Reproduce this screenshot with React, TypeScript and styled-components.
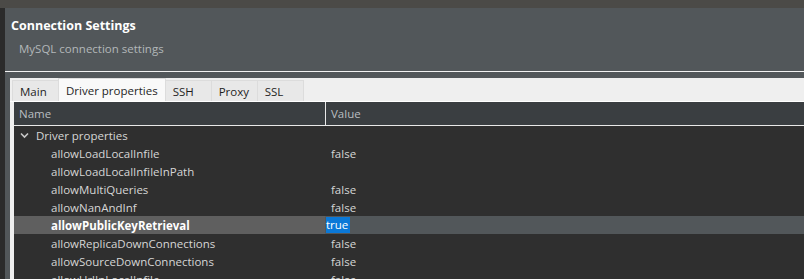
import styled, { createGlobalStyle } from "styled-components";

const GlobalStyle = createGlobalStyle`
  html, body {
    margin: 0;
    padding: 0;
    background: #2b2b2b;
    overflow: hidden;
  }
  * { box-sizing: border-box; }
`;

const Page = styled.div`
  width: 804px;
  height: 279px;
  display: flex;
  flex-direction: column;
  font-family: "Open Sans", "Noto Sans CJK KR", sans-serif;
  font-size: 11.5px;
  overflow: hidden;
`;

const TopBar = styled.div`
  height: 8px;
  flex: none;
  background: #4b4a47;
`;

const Body = styled.div`
  flex: 1;
  display: flex;
  min-height: 0;
`;

const SideStrip = styled.div`
  width: 5px;
  flex: none;
  background: #2b2b2b;
`;

const Dialog = styled.div`
  flex: 1;
  display: flex;
  flex-direction: column;
  background: #52575a;
  min-width: 0;
`;

const Header = styled.div`
  height: 63px;
  flex: none;
  padding: 9px 0 0 6px;
`;

const Title = styled.div`
  color: #ffffff;
  font-weight: 700;
  font-size: 12.5px;
  line-height: 18px;
`;

const Subtitle = styled.div`
  color: #b3b7b9;
  font-size: 11.5px;
  line-height: 18px;
  margin: 5px 0 0 8px;
`;

const Rule = styled.div`
  height: 1px;
  flex: none;
  background: #f2f2f2;
  margin-bottom: 6px;
`;

const TabPane = styled.div`
  flex: 1;
  display: flex;
  flex-direction: column;
  margin-left: 5px;
  background: #efefef;
  padding-left: 4px;
  min-height: 0;
`;

const TabStrip = styled.div`
  height: 24px;
  flex: none;
  display: flex;
  align-items: flex-end;
  border-bottom: 1px solid #ffffff;
  margin-left: -4px;
  padding-left: 2px;
`;

const Tab = styled.div<{ $active?: boolean }>`
  height: ${({ $active }) => ($active ? "23px" : "21px")};
  min-width: 47px;
  padding: 0 7px;
  margin-right: -1px;
  display: flex;
  align-items: center;
  color: #1e1e1e;
  background: ${({ $active }) => ($active ? "#f9f9f9" : "#e8e8e8")};
  border: 1px solid #dcdcdc;
  border-bottom: none;
  position: relative;
  z-index: ${({ $active }) => ($active ? 1 : 0)};
`;

const Tree = styled.div`
  flex: 1;
  display: flex;
  flex-direction: column;
  background: #2f2f2f;
  min-height: 0;
`;

const HeadRow = styled.div`
  height: 24px;
  flex: none;
  display: grid;
  grid-template-columns: 311px 1fr;
  background: #3a3e41;
  border-bottom: 1px solid #e8e8e8;
`;

const HeadCell = styled.div<{ $divider?: boolean }>`
  display: flex;
  align-items: center;
  padding-left: 5px;
  color: #b9bdc0;
  border-left: ${({ $divider }) => ($divider ? "1px solid #e8e8e8" : "none")};
`;

const Row = styled.div<{ $selected?: boolean }>`
  height: 18px;
  flex: none;
  display: grid;
  grid-template-columns: 311px 1fr;
  background: ${({ $selected }) => ($selected ? "#52575a" : "transparent")};
`;

const NameCell = styled.div<{ $indent: number; $selected?: boolean }>`
  display: flex;
  align-items: center;
  padding-left: ${({ $indent }) => $indent}px;
  color: ${({ $selected }) => ($selected ? "#ffffff" : "#d6d6d6")};
  font-weight: ${({ $selected }) => ($selected ? 700 : 400)};
  background: ${({ $selected }) => ($selected ? "#5f5f5f" : "transparent")};
  white-space: nowrap;
`;

const ValueCell = styled.div`
  display: flex;
  align-items: center;
  padding-left: 6px;
  color: #d6d6d6;
`;

const Highlight = styled.span`
  background: #0a78d7;
  color: #ffffff;
  margin-left: -5px;
  padding: 0 2px 0 0;
  line-height: 16px;
`;

const Chevron = styled.svg`
  width: 9px;
  height: 9px;
  margin-right: 7px;
  flex: none;
`;

const props: { name: string; value: string }[] = [
  { name: "allowLoadLocalInfile", value: "false" },
  { name: "allowLoadLocalInfileInPath", value: "" },
  { name: "allowMultiQueries", value: "false" },
  { name: "allowNanAndInf", value: "false" },
  { name: "allowPublicKeyRetrieval", value: "true" },
  { name: "allowReplicaDownConnections", value: "false" },
  { name: "allowSourceDownConnections", value: "false" },
  { name: "allowUrlInLocalInfile", value: "false" },
];

const tabs = ["Main", "Driver properties", "SSH", "Proxy", "SSL"];

export default function App() {
  const selected = "allowPublicKeyRetrieval";
  return (
    <Page>
      <GlobalStyle />
      <TopBar />
      <Body>
        <SideStrip />
        <Dialog>
          <Header>
            <Title>Connection Settings</Title>
            <Subtitle>MySQL connection settings</Subtitle>
          </Header>
          <Rule />
          <TabPane>
            <TabStrip>
              {tabs.map((t) => (
                <Tab key={t} $active={t === "Driver properties"}>
                  {t}
                </Tab>
              ))}
            </TabStrip>
            <Tree>
              <HeadRow>
                <HeadCell>Name</HeadCell>
                <HeadCell $divider>Value</HeadCell>
              </HeadRow>
              <Row>
                <NameCell $indent={6}>
                  <Chevron viewBox="0 0 9 9">
                    <path d="M1 2.5 L4.5 6 L8 2.5" fill="none" stroke="#c8c8c8" strokeWidth="1.6" />
                  </Chevron>
                  Driver properties
                </NameCell>
                <ValueCell />
              </Row>
              {props.map((p) => {
                const isSel = p.name === selected;
                return (
                  <Row key={p.name} $selected={isSel}>
                    <NameCell $indent={37} $selected={isSel}>
                      {p.name}
                    </NameCell>
                    <ValueCell>
                      {isSel ? <Highlight>{p.value}</Highlight> : p.value}
                    </ValueCell>
                  </Row>
                );
              })}
            </Tree>
          </TabPane>
        </Dialog>
      </Body>
    </Page>
  );
}
